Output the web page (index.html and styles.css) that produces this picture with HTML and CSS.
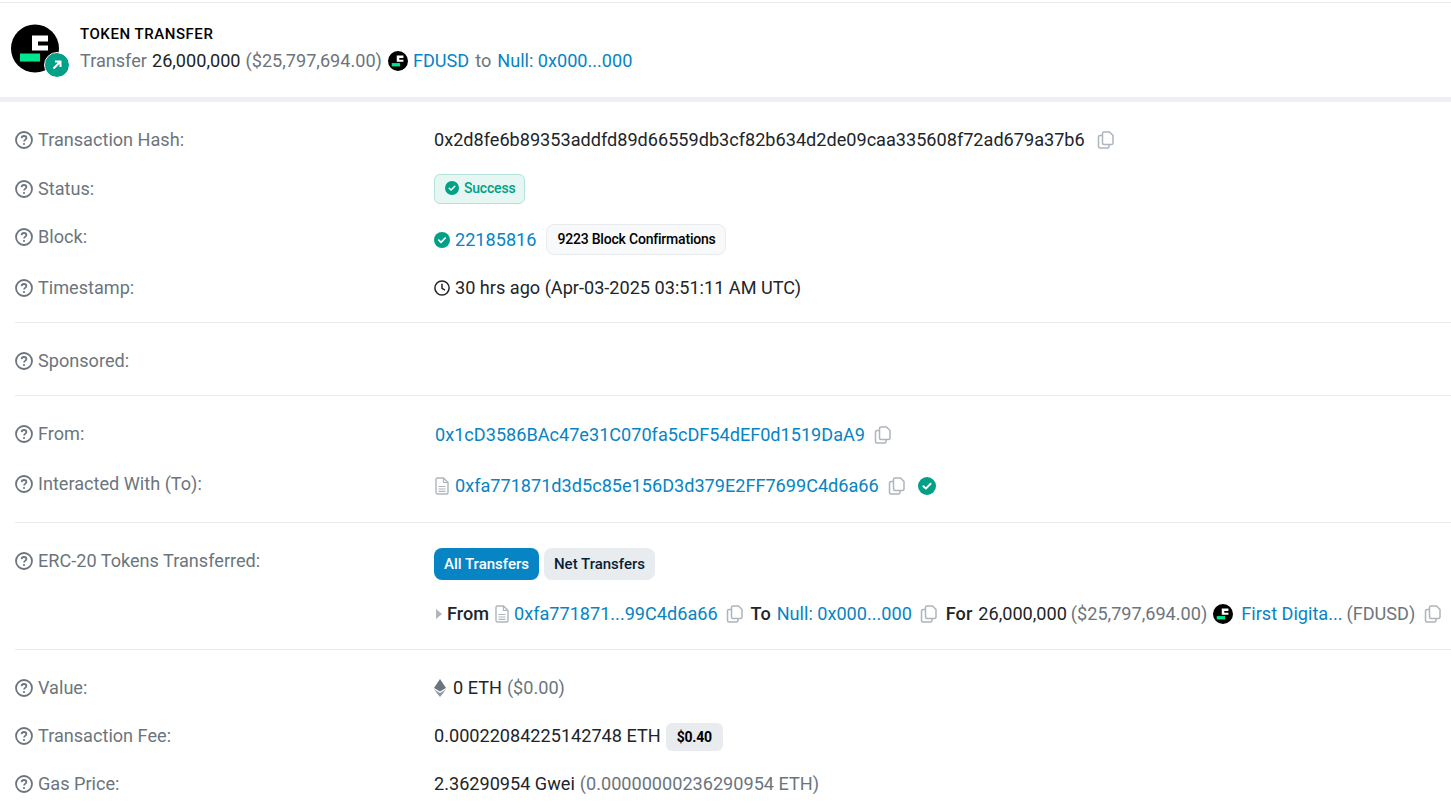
FILE: index.html
```html
<!DOCTYPE html>
<html lang="en">
<head>
<meta charset="utf-8">
<title>Token Transfer</title>
<link rel="stylesheet" href="styles.css">
</head>
<body>
<svg class="defs" width="0" height="0" aria-hidden="true">
  <defs>
    <symbol id="q" viewBox="0 0 18 18">
      <circle cx="9" cy="9" r="8" fill="none" stroke="#6c757d" stroke-width="1.800"/>
      <path d="M6.600 7.100C6.700 5.700 7.700 5 9 5c1.400 0 2.400.8 2.400 2 0 1.900-2.400 1.800-2.400 3.600" fill="none" stroke="#6c757d" stroke-width="1.800"/>
      <circle cx="9" cy="13" r="1.100" fill="#6c757d"/>
    </symbol>
    <symbol id="copy" viewBox="0 0 17 18">
      <path d="M7 1h5.500L16 4.500V12a1.500 1.500 0 0 1-1.500 1.500H7A1.500 1.500 0 0 1 5.500 12V2.500A1.500 1.500 0 0 1 7 1Z" fill="none" stroke="#adb5bd" stroke-width="1.500"/>
      <path d="M5.500 4.500H3A1.500 1.500 0 0 0 1.500 6v9.500A1.500 1.500 0 0 0 3 17h7.500a1.500 1.500 0 0 0 1.500-1.500v-2" fill="none" stroke="#adb5bd" stroke-width="1.500"/>
    </symbol>
    <symbol id="check" viewBox="0 0 16 16">
      <circle cx="8" cy="8" r="8" fill="#00a186"/>
      <path d="M4.800 8.200 7 10.300l4.200-4.300" fill="none" stroke="#fff" stroke-width="1.700" stroke-linecap="round" stroke-linejoin="round"/>
    </symbol>
    <symbol id="doc" viewBox="0 0 14 18">
      <path d="M2.500 1h6L13 5.500V15.500A1.500 1.500 0 0 1 11.500 17h-9A1.500 1.500 0 0 1 1 15.500v-13A1.500 1.500 0 0 1 2.500 1Z" fill="none" stroke="#adb5bd" stroke-width="1.400"/>
      <path d="M8.500 1v4.500H13M3.500 9.500h7M3.500 12h7M3.500 14.300h7" fill="none" stroke="#adb5bd" stroke-width="1.200"/>
    </symbol>
    <symbol id="coin" viewBox="0 0 48 48">
      <circle cx="24" cy="24" r="24" fill="#000"/>
      <path d="M21 11h16v6H27v4h10v5H21Z" fill="#fff"/>
      <rect x="9" y="29" width="20" height="8" fill="#00e88f"/>
    </symbol>
  </defs>
</svg>

<header class="head">
  <div class="logo">
    <svg class="logo-coin"><use href="#coin"/></svg>
    <span class="logo-badge">
      <svg viewBox="0 0 12 12" width="12" height="12"><path d="M2.500 9.500 9 3M4 2.500h5.500V8" fill="none" stroke="#fff" stroke-width="2"/></svg>
    </span>
  </div>
  <div class="head-text">
    <div class="head-title">TOKEN TRANSFER</div>
    <div class="head-line">
      <span class="muted">Transfer</span>
      <span>26,000,000</span>
      <span class="muted">($25,797,694.00)</span>
      <svg class="coin-sm"><use href="#coin"/></svg>
      <a class="link tight">FDUSD</a>
      <span class="muted tight">to</span>
      <a class="link">Null: 0x000...000</a>
    </div>
  </div>
</header>

<main class="details">
  <section class="group">
    <div class="row r-hash">
      <div class="label"><svg class="q"><use href="#q"/></svg>Transaction Hash:</div>
      <div class="value">0x2d8fe6b89353addfd89d66559db3cf82b634d2de09caa335608f72ad679a37b6<svg class="copy ml12"><use href="#copy"/></svg></div>
    </div>
    <div class="row r-status">
      <div class="label"><svg class="q"><use href="#q"/></svg>Status:</div>
      <div class="value"><span class="success"><svg class="check-xs"><use href="#check"/></svg>Success</span></div>
    </div>
    <div class="row r-block">
      <div class="label"><svg class="q"><use href="#q"/></svg>Block:</div>
      <div class="value"><svg class="check-sm"><use href="#check"/></svg><a class="link">22185816</a><span class="confirm">9223 Block Confirmations</span></div>
    </div>
    <div class="row r-time">
      <div class="label"><svg class="q"><use href="#q"/></svg>Timestamp:</div>
      <div class="value">
        <svg class="clock" viewBox="0 0 16 16"><circle cx="8" cy="8" r="7.100" fill="none" stroke="#212529" stroke-width="1.500"/><path d="M8 3.800V8.300l3 1.900" fill="none" stroke="#212529" stroke-width="1.500"/></svg>30 hrs ago (Apr-03-2025 03:51:11 AM UTC)
      </div>
    </div>
  </section>

  <section class="group">
    <div class="row r-sponsor">
      <div class="label"><svg class="q"><use href="#q"/></svg>Sponsored:</div>
      <div class="value"></div>
    </div>
  </section>

  <section class="group">
    <div class="row r-from">
      <div class="label"><svg class="q"><use href="#q"/></svg>From:</div>
      <div class="value"><a class="link from-addr">0x1cD3586BAc47e31C070fa5cDF54dEF0d1519DaA9</a><svg class="copy ml9"><use href="#copy"/></svg></div>
    </div>
    <div class="row r-to">
      <div class="label"><svg class="q"><use href="#q"/></svg>Interacted With (To):</div>
      <div class="value"><svg class="doc doc-a"><use href="#doc"/></svg><a class="link">0xfa771871d3d5c85e156D3d379E2FF7699C4d6a66</a><svg class="copy ml9"><use href="#copy"/></svg><svg class="check-md"><use href="#check"/></svg></div>
    </div>
  </section>

  <section class="group">
    <div class="row r-erc">
      <div class="label"><svg class="q"><use href="#q"/></svg>ERC-20 Tokens Transferred:</div>
      <div class="value stack">
        <div class="tabs"><span class="tab active">All Transfers</span><span class="tab">Net Transfers</span></div>
        <div class="transfer">
          <span class="caret"></span><b class="strong">From</b><svg class="doc doc-b"><use href="#doc"/></svg><a class="link">0xfa771871...99C4d6a66</a><svg class="copy ml8"><use href="#copy"/></svg><b class="strong ml8">To</b><a class="link sp-6">Null: 0x000...000</a><svg class="copy ml8"><use href="#copy"/></svg><b class="strong ml9">For</b><span class="sp-6">26,000,000</span><span class="muted sp-4">($25,797,694.00)</span><svg class="coin-sm sp-6"><use href="#coin"/></svg><a class="link sp-8">First Digita...</a><span class="muted sp-4">(FDUSD)</span><svg class="copy ml9"><use href="#copy"/></svg>
        </div>
      </div>
    </div>
  </section>

  <section class="group last">
    <div class="row r-value">
      <div class="label"><svg class="q"><use href="#q"/></svg>Value:</div>
      <div class="value"><svg class="eth" viewBox="0 0 12 18"><path d="M6 0 12 9.100 6 12.400 0 9.100Z" fill="#6c757d"/><path d="M0 10.500 6 14 12 10.500 6 18Z" fill="#8c98a4"/></svg>0 ETH <span class="muted sp-5">($0.00)</span></div>
    </div>
    <div class="row r-fee">
      <div class="label"><svg class="q"><use href="#q"/></svg>Transaction Fee:</div>
      <div class="value">0.00022084225142748 ETH<span class="usd">$0.40</span></div>
    </div>
    <div class="row r-gas">
      <div class="label"><svg class="q"><use href="#q"/></svg>Gas Price:</div>
      <div class="value">2.36290954 Gwei <span class="muted sp-5">(0.00000000236290954 ETH)</span></div>
    </div>
  </section>
</main>
</body>
</html>
```

FILE: styles.css
```css
* { box-sizing: border-box; }

html, body {
  margin: 0;
  height: 802px;
  overflow: hidden;
  background: #fff;
}

body {
  padding-top: 2px;
  font-family: Roboto, "Liberation Sans", sans-serif;
  font-size: 18.13px;
  line-height: 24px;
  color: #212529;
}

.defs { position: absolute; }

.muted { color: #6c757d; }

.link { color: #0784c3; }

.head {
  display: flex;
  height: 100px;
  padding: 21px 0 0 11px;
  border-top: 1px solid #e9ecef;
  border-bottom: 5px solid #eef0f5;
  white-space: nowrap;
}

.logo { position: relative; width: 48px; height: 49px; }
.logo-coin { display: block; width: 48px; height: 49px; }
.logo-badge {
  position: absolute;
  left: 34px;
  top: 29px;
  width: 24px;
  height: 24px;
  display: flex;
  align-items: center;
  justify-content: center;
  border-radius: 50%;
  background: #00a186;
  outline: 1px solid #fff;
}

.head-text { margin-left: 21px; }
.head-title {
  font-size: 15px;
  font-weight: 500;
  line-height: 20px;
  letter-spacing: .55px;
  color: #000;
}
.head-line { display: flex; align-items: center; height: 24px; margin-top: 5px; }
.head-line > * { margin-right: 5px; }
.head-line .coin-sm { margin: 0 5px 0 1px; }
.head-line .tight { margin-right: 6px; }

.coin-sm { width: 20px; height: 20px; flex: none; }

.details { padding-left: 15px; }

.group { border-bottom: 1px solid #e9ecef; }
.group.last { border-bottom: 0; }

.row { display: flex; align-items: flex-start; white-space: nowrap; }

.label {
  flex: none;
  width: 419px;
  display: flex;
  align-items: center;
  height: 24px;
  color: #6c757d;
}

.q { width: 18px; height: 18px; margin-right: 5px; flex: none; }

.value { display: flex; align-items: center; min-height: 24px; }

.r-hash { height: 62px; padding-top: 26px; }
.r-status { height: 49px; padding-top: 13px; }
.r-status .value { margin-top: -3px; }
.r-block { height: 50px; padding-top: 12px; }
.r-block .value { margin-top: -1px; }
.r-time { height: 59px; padding-top: 13px; }

.r-sponsor { height: 72px; padding-top: 26px; }

.r-from { height: 50px; padding-top: 26px; }
.r-from .value { margin-top: 1px; }
.r-to { height: 76px; padding-top: 26px; }
.r-to .value { margin-top: 2px; }

.r-erc { height: 126px; padding-top: 26px; }
.r-erc .value { margin-top: -1px; }

.r-value { height: 48px; padding-top: 26px; }
.r-fee { height: 48px; padding-top: 26px; }
.r-gas { padding-top: 26px; }

.stack { flex-direction: column; align-items: flex-start; }

.copy { width: 17px; height: 18px; flex: none; }
.ml12 { margin-left: 12px; }
.ml9 { margin-left: 9px; }
.ml8 { margin-left: 8px; }

.success {
  display: flex;
  align-items: center;
  height: 30px;
  padding: 0 9px 2px 10px;
  font-size: 14px;
  letter-spacing: -.2px;
  font-weight: 500;
  color: #00a186;
  background: #e6f6f3;
  border: 1px solid #b3e3db;
  border-radius: 6px;
}
.check-xs { width: 14px; height: 14px; margin-right: 5px; }
.check-sm { width: 16px; height: 16px; margin-right: 5px; }
.check-md { width: 18px; height: 18px; margin-left: 13px; }

.confirm {
  display: flex;
  align-items: center;
  height: 31px;
  margin-left: 10px;
  padding: 0 9px 2px 10px;
  font-size: 14px;
  letter-spacing: -.2px;
  font-weight: 500;
  color: #000;
  background: #f8f9fa;
  border: 1px solid #e9ecef;
  border-radius: 8px;
}

.clock { width: 16px; height: 16px; margin-right: 5px; flex: none; }

.from-addr { margin-left: 1px; }

.doc { flex: none; }
.doc-a { width: 14px; height: 18px; margin: 0 6px 0 1px; }
.doc-b { width: 14px; height: 18px; margin: 0 5px 0 6px; }

.tabs { display: flex; gap: 5px; }
.tab {
  display: flex;
  align-items: center;
  height: 32px;
  padding: 0 10px;
  font-size: 15px;
  font-weight: 500;
  border-radius: 8px;
  background: #e9ecef;
  color: #081d35;
}
.tab.active { background: #0784c3; color: #fff; }

.transfer { display: flex; align-items: center; margin-top: 22px; height: 24px; }
.caret {
  width: 0;
  height: 0;
  margin-left: 2px;
  margin-right: 5px;
  border-left: 6px solid #adb5bd;
  border-top: 5px solid transparent;
  border-bottom: 5px solid transparent;
}
.strong { font-weight: 500; color: #212529; }
.sp-4 { margin-left: 4px; }
.sp-5 { margin-left: 5px; }
.sp-6 { margin-left: 6px; }
.sp-8 { margin-left: 8px; }

.eth { width: 12px; height: 18px; margin-right: 7px; flex: none; }

.usd {
  display: flex;
  align-items: center;
  height: 28px;
  margin: -1px 0 -3px 5px;
  padding: 0 11px;
  font-size: 14px;
  letter-spacing: -.2px;
  font-weight: 700;
  color: #000;
  background: #e9ecef;
  border-radius: 6px;
}
```
